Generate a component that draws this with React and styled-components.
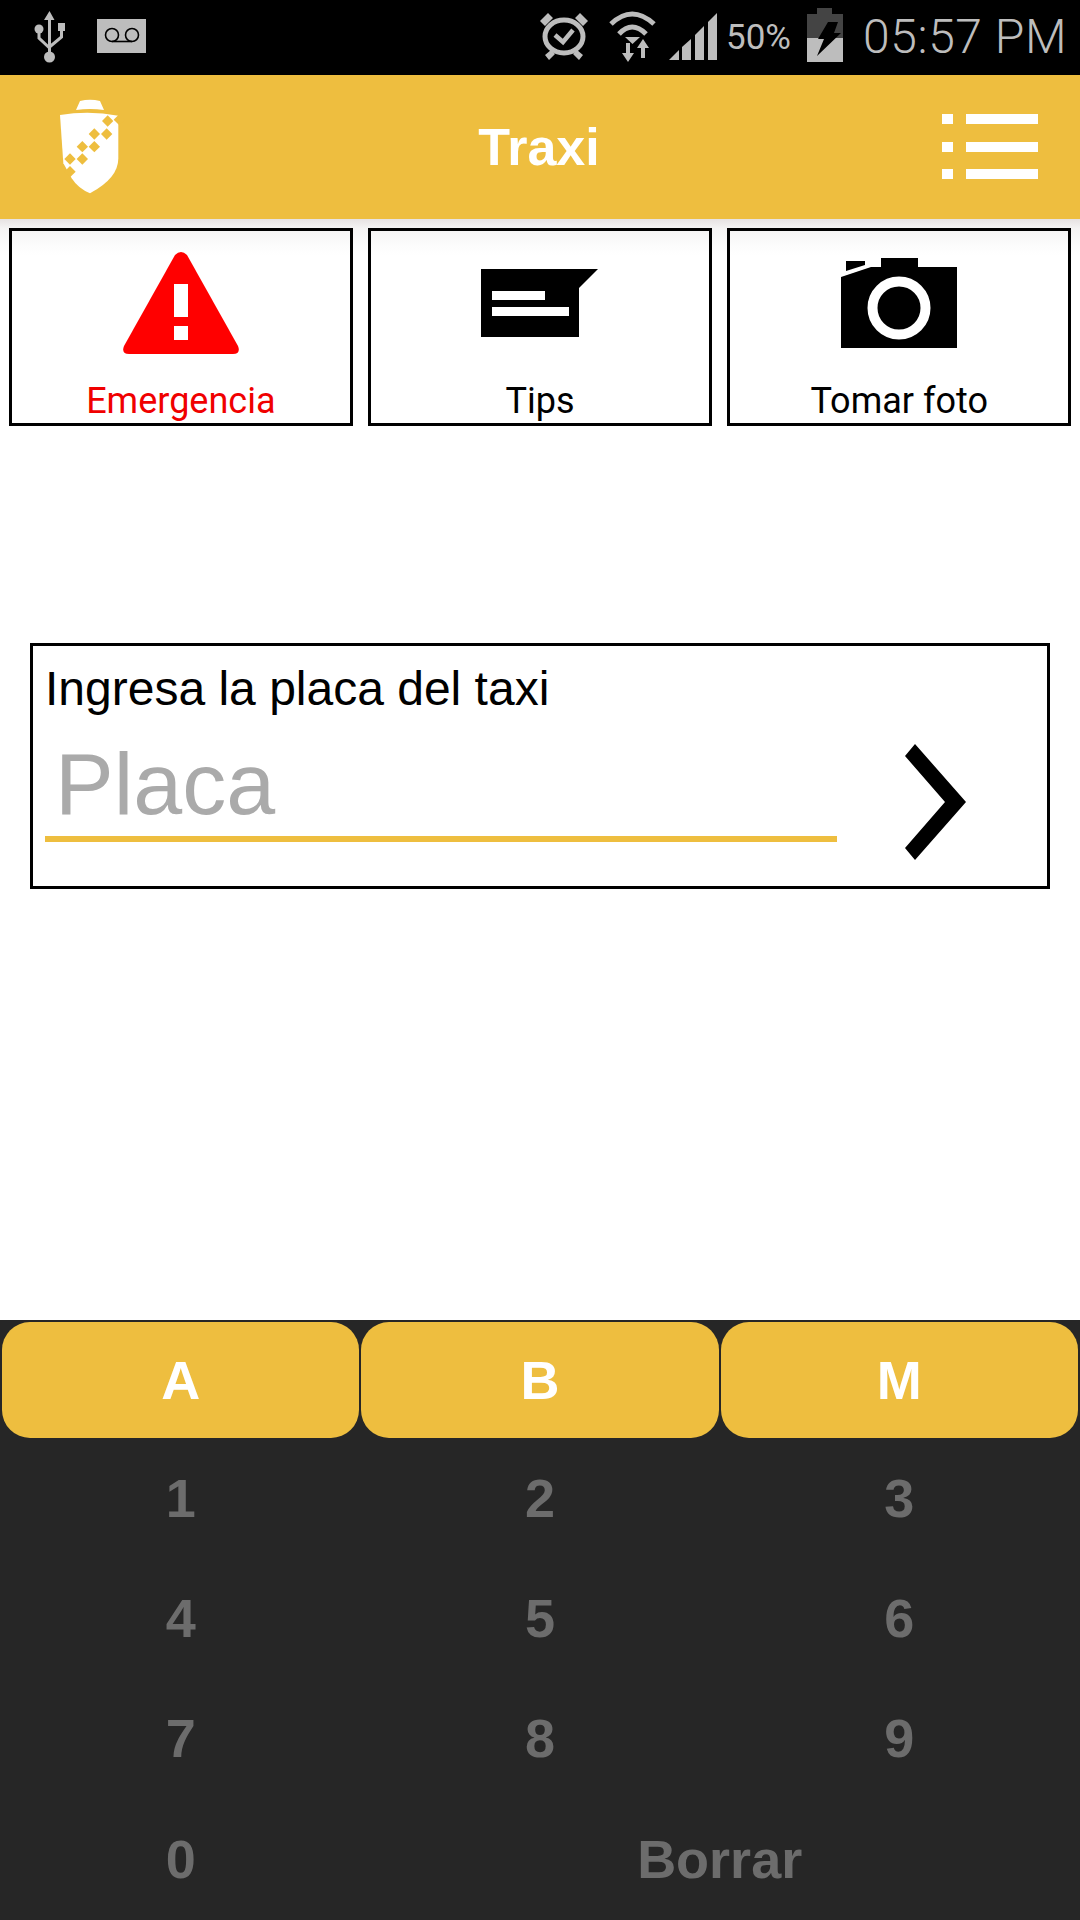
import React from 'react';
import styled, { createGlobalStyle } from 'styled-components';

const yellow = '#eebe3f';

const GlobalStyle = createGlobalStyle`
    html, body { margin:0; padding:0; background:#fff; }
    * { box-sizing:border-box; }
`;

const Page = styled.div`
    width:1080px;
    height:1920px;
    display:flex;
    flex-direction:column;
    overflow:hidden;
    font-family:"Liberation Sans", Arial, sans-serif;
`;

const StatusBar = styled.div`
    height:75px;
    flex:none;
    background:#000;
    display:flex;
    align-items:flex-start;
    justify-content:space-between;
    color:#bdbdbd;
    font-family:Roboto, sans-serif;
`;

const StatusGroup = styled.div`
    display:flex;
    align-items:flex-start;
    padding-left:${props => props.$left || 0}px;
    padding-right:${props => props.$right || 0}px;
`;

const StatusIcon = styled.svg`
    display:block;
    flex:none;
    margin-top:${props => props.$top}px;
    margin-left:${props => props.$gap || 0}px;
`;

const Percent = styled.span`
    width:65px;
    font-size:35px;
    line-height:38px;
    margin:19px 16px 0 9px;
    white-space:nowrap;
`;

const Clock = styled.span`
    width:200px;
    font-size:48px;
    font-weight:300;
    line-height:54px;
    margin:10px 0 0 20px;
    letter-spacing:0.6px;
    white-space:nowrap;
`;

const Header = styled.header`
    height:144px;
    flex:none;
    background:${yellow};
    display:grid;
    grid-template-columns:1fr auto 1fr;
    align-items:center;
    padding:0 42px 0 40px;
`;

const Logo = styled.svg`
    display:block;
    margin-top:-4px;
`;

const Title = styled.h1`
    margin:0;
    text-align:center;
    color:#fff;
    font-size:52px;
    line-height:58px;
    font-weight:700;
`;

const MenuIcon = styled.svg`
    display:block;
    justify-self:end;
    margin-top:-1px;
`;

const Main = styled.main`
    flex:1;
    background:linear-gradient(#e6e2e2 0, #f4f3f3 9px, #fbfbfb 24px, #fff 36px);
    padding-top:9px;
`;

const TileRow = styled.div`
    display:grid;
    grid-template-columns:repeat(3, 1fr);
    column-gap:15.5px;
    padding:0 9px;
`;

const Tile = styled.button`
    height:198px;
    padding:0;
    border:3px solid #000;
    background:transparent;
    display:flex;
    flex-direction:column;
    align-items:center;
    font-family:Roboto, sans-serif;
    font-size:36px;
    line-height:40px;
    color:${props => props.$danger ? '#f00000' : '#000'};
`;

const TileIcon = styled.div`
    height:150px;
    flex:none;
    align-self:stretch;
    display:flex;
    align-items:flex-start;
    justify-content:center;
    svg { display:block; margin-top:${props => props.$top}px; }
`;

const Panel = styled.section`
    height:246px;
    margin:217px 30px 0;
    border:3px solid #000;
    padding:15px 12px 0;
    position:relative;
`;

const PanelLabel = styled.div`
    font-size:48px;
    line-height:56px;
    color:#000;
`;

const PlacaField = styled.div`
    width:792px;
    height:125px;
    padding:17px 0 0 10px;
    border-bottom:6px solid ${yellow};
    color:#aaa;
    font-size:88px;
    line-height:100px;
`;

const GoIcon = styled.svg`
    position:absolute;
    left:872px;
    top:98px;
    display:block;
`;

const Keyboard = styled.div`
    height:600px;
    flex:none;
    background:#262626;
    padding:2px 2px 0;
    display:grid;
    grid-template-columns:repeat(3, 1fr);
    column-gap:2px;
    grid-template-rows:116px repeat(3, 120px) 1fr;
    font-weight:700;
    font-size:54px;
`;

const LetterKey = styled.div`
    border-radius:28px;
    background:${yellow};
    color:#fff;
    display:flex;
    align-items:center;
    justify-content:center;
`;

const NumberKey = styled.div`
    color:#6c6c6c;
    display:flex;
    align-items:center;
    justify-content:center;
    grid-column:${props => props.$wide ? 'span 2' : 'auto'};
`;

const letters = ['A', 'B', 'M'];
const numbers = ['1', '2', '3', '4', '5', '6', '7', '8', '9', '0'];

const UsbIcon = () => (
    <StatusIcon $top={11} width="31" height="52" viewBox="0 0 31 52" fill="#bdbdbd">
        <path d="M15.5 0l5 9h-3.5v34h-3V9H10z" />
        <circle cx="15.5" cy="46" r="5.5" />
        <circle cx="5" cy="18" r="4.5" />
        <rect x="24" y="12" width="7" height="8" />
        <path d="M5 20v7l10.5 10M27.5 19v7l-12 10" fill="none" stroke="#bdbdbd" strokeWidth="3" />
    </StatusIcon>
);

const VoicemailIcon = () => (
    <StatusIcon $top={19} $gap={32} width="49" height="34" viewBox="0 0 49 34">
        <rect width="49" height="34" fill="#bdbdbd" />
        <circle cx="15" cy="16" r="6.5" fill="none" stroke="#000" strokeWidth="1.6" />
        <circle cx="35" cy="16" r="6.5" fill="none" stroke="#000" strokeWidth="1.6" />
        <path d="M15 22.5h20" stroke="#000" strokeWidth="1.6" />
    </StatusIcon>
);

const AlarmIcon = () => (
    <StatusIcon $top={13} width="48" height="47" viewBox="0 0 48 47">
        <ellipse cx="24" cy="23.5" rx="19" ry="16.5" fill="none" stroke="#bdbdbd" strokeWidth="5" />
        <path d="M0 8l8-8 5 5-8 8zM48 8l-8-8-5 5 8 8zM5 42l6-5 4 4-6 6zM43 42l-6-5-4 4 6 6z" fill="#bdbdbd" />
        <path d="M15 22l8 7 10-12" fill="none" stroke="#bdbdbd" strokeWidth="4.5" />
    </StatusIcon>
);

const WifiIcon = () => (
    <StatusIcon $top={9} $gap={20} width="49" height="53" viewBox="0 0 49 53" fill="#bdbdbd">
        <path d="M3 15Q24-5 46 15" fill="none" stroke="#bdbdbd" strokeWidth="5" />
        <path d="M11 25Q24 11 38 25" fill="none" stroke="#bdbdbd" strokeWidth="5" />
        <path d="M17 28h15l-7.5 7z" />
        <path d="M18 34h4v10h4l-6 9-6-9h4z" />
        <path d="M35 30l6 9h-4v10h-4V39h-4z" />
    </StatusIcon>
);

const SignalIcon = () => (
    <StatusIcon $top={13} $gap={12} width="48" height="47" viewBox="0 0 48 47" fill="#bdbdbd">
        <path d="M0 47l10-10v10z" />
        <path d="M13 34l9-8v21h-9z" />
        <path d="M26 22l9-9v34h-9z" />
        <path d="M39 9l9-9v47h-9z" />
    </StatusIcon>
);

const BatteryIcon = () => (
    <StatusIcon $top={8} width="36" height="54" viewBox="0 0 36 54">
        <rect x="10" width="15" height="6" fill="#444" />
        <rect y="6" width="36" height="24" fill="#444" />
        <rect y="30" width="36" height="24" fill="#bdbdbd" />
        <path d="M21 14h10l-4 11h7L10 48l7-17h-6z" fill="#000" />
    </StatusIcon>
);

const ShieldLogo = () => (
    <Logo width="100" height="120" viewBox="0 0 300 360">
        <path d="M108 75l12-27q30-8 60 0l12 27q-42-6-84 0z" fill="#fff" />
        <path d="M60 90q88-14 175 2v128q0 60-85 105-35-14-55-45L70 235z" fill="#fff" />
        {[[203, 108], [238, 104], [200, 147], [163, 147], [163, 185], [127, 185], [127, 222], [90, 222], [90, 260]].map(([x, y]) => (
            <path key={`${x}-${y}`} d={`M${x} ${y - 17}l17 17-17 17-17-17z`} fill={yellow} />
        ))}
    </Logo>
);

const ListIcon = () => (
    <MenuIcon width="96" height="65" viewBox="0 0 96 65" fill="#fff">
        <rect y="0" width="11" height="10" />
        <rect y="28" width="11" height="10" />
        <rect y="55" width="11" height="10" />
        <rect x="24" y="0" width="72" height="10" />
        <rect x="24" y="28" width="72" height="10" />
        <rect x="24" y="55" width="72" height="10" />
    </MenuIcon>
);

const WarningIcon = () => (
    <svg width="118" height="102" viewBox="0 0 118 102">
        <path d="M53 3q6-6 12 0l51 91q3 8-5 8H7q-8 0-5-8z" fill="#f00" />
        <rect x="52" y="32" width="14" height="33" fill="#fff" />
        <rect x="52" y="74" width="14" height="14" fill="#fff" />
    </svg>
);

const TipsIcon = () => (
    <svg width="117" height="68" viewBox="0 0 117 68">
        <path d="M0 0h117L98 19v49H0z" fill="#000" />
        <rect x="11" y="22" width="53" height="9" fill="#fff" />
        <rect x="11" y="38" width="77" height="9" fill="#fff" />
    </svg>
);

const CameraIcon = () => (
    <svg width="116" height="90" viewBox="0 0 116 90">
        <path d="M0 19l30-10h10V0h37v9h39v81H0z" fill="#000" />
        <path d="M5 3h19v4L5 13z" fill="#000" />
        <circle cx="58" cy="50" r="26.5" fill="none" stroke="#fff" strokeWidth="10" />
    </svg>
);

const Chevron = () => (
    <GoIcon width="61" height="116" viewBox="0 0 61 116">
        <path d="M10 0l51 58-51 58-10-12 40-46L0 12z" fill="#000" />
    </GoIcon>
);

export default function App() {
    return (
        <Page>
            <GlobalStyle />
            <StatusBar>
                <StatusGroup $left={34}>
                    <UsbIcon />
                    <VoicemailIcon />
                </StatusGroup>
                <StatusGroup $right={17}>
                    <AlarmIcon />
                    <WifiIcon />
                    <SignalIcon />
                    <Percent>50%</Percent>
                    <BatteryIcon />
                    <Clock>05:57 PM</Clock>
                </StatusGroup>
            </StatusBar>
            <Header>
                <ShieldLogo />
                <Title>Traxi</Title>
                <ListIcon />
            </Header>
            <Main>
                <TileRow>
                    <Tile $danger>
                        <TileIcon $top={21}><WarningIcon /></TileIcon>
                        Emergencia
                    </Tile>
                    <Tile>
                        <TileIcon $top={38}><TipsIcon /></TileIcon>
                        Tips
                    </Tile>
                    <Tile>
                        <TileIcon $top={27}><CameraIcon /></TileIcon>
                        Tomar foto
                    </Tile>
                </TileRow>
                <Panel>
                    <PanelLabel>Ingresa la placa del taxi</PanelLabel>
                    <PlacaField>Placa</PlacaField>
                    <Chevron />
                </Panel>
            </Main>
            <Keyboard>
                {letters.map(letter => <LetterKey key={letter}>{letter}</LetterKey>)}
                {numbers.map(number => <NumberKey key={number}>{number}</NumberKey>)}
                <NumberKey $wide>Borrar</NumberKey>
            </Keyboard>
        </Page>
    );
}
